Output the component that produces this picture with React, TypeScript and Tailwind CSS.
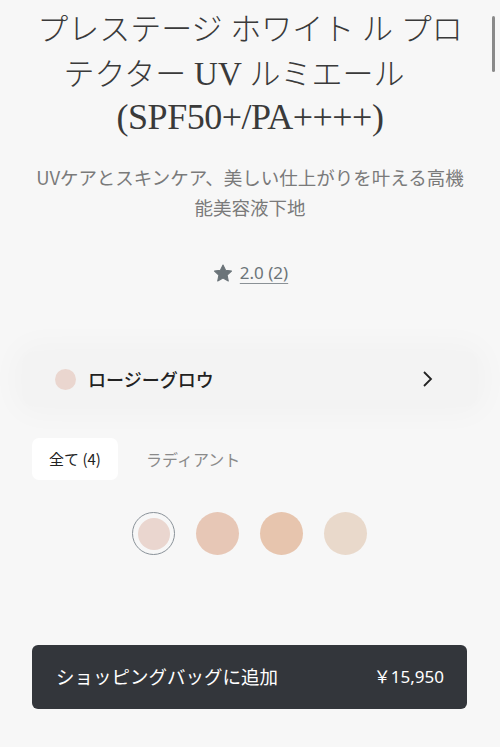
import React from 'react';

const swatches = [
  { id: 1, color: 'bg-[#ead6cf]', selected: true },
  { id: 2, color: 'bg-[#e7c7b6]', selected: false },
  { id: 3, color: 'bg-[#e7c5ae]', selected: false },
  { id: 4, color: 'bg-[#e9d9cb]', selected: false },
];

const StarIcon = () => (
  <svg width="22" height="21" viewBox="0 0 24 24" className="fill-[#6b7479]">
    <path d="M12 2.2l2.95 6.2 6.8.8-5.03 4.66 1.33 6.74L12 17.2l-6.05 3.4 1.33-6.74L2.25 9.2l6.8-.8z" strokeLinejoin="round" stroke="#6b7479" strokeWidth="1.2" />
  </svg>
);

const App: React.FC = () => {
  return (
    <div className="relative w-[500px] h-[747px] overflow-hidden bg-[#f7f7f7] font-['Noto_Sans_CJK_JP',sans-serif]">
      {/* scrollbar thumb */}
      <div className="absolute right-[5px] top-[16px] w-[3px] h-[56px] rounded-full bg-[#8a8a8a]" />

      {/* Title */}
      <h1 className="pt-[8px] px-[20px] text-center text-[31px] leading-[44px] font-light text-[#3a3a3a] font-['Liberation_Serif','Noto_Sans_CJK_JP',serif]">
        プレステージ ホワイト ル プロ<br />
        テクター <span className="text-[33px]">UV</span> ルミエール<span className="inline-block w-[32px]" /><br />
        <span className="text-[36px] tracking-[-0.5px] leading-[40px]">(SPF50+/PA++++)</span>
      </h1>

      {/* Description */}
      <p className="mt-[21px] px-[20px] text-center text-[18.5px] leading-[30px] text-[#7a7a7a]">
        UVケアとスキンケア、美しい仕上がりを叶える高機<br />
        能美容液下地
      </p>

      {/* Rating */}
      <div className="mt-[40px] flex items-center justify-center gap-[6px]">
        <StarIcon />
        <span className="text-[17px] leading-[22px] text-[#6b7479] underline underline-offset-[4px] decoration-[#8a9196] font-['Noto_Sans',sans-serif]">
          2.0 (2)
        </span>
      </div>

      {/* Variant selector */}
      <div className="mt-[67px] mx-[22px] h-[56px] rounded-[14px] bg-[#f3f3f3] shadow-[0_0_30px_8px_rgba(0,0,0,0.025)] flex items-center pl-[33px] pr-[43px]">
        <span className="w-[21px] h-[21px] rounded-full bg-[#ead6cf]" />
        <span className="ml-[12px] text-[18px] font-medium text-[#222]">ロージーグロウ</span>
        <svg className="ml-auto" width="14" height="18" viewBox="0 0 14 18" fill="none" stroke="#222" strokeWidth="1.8">
          <path d="M3 2l7 7-7 7" />
        </svg>
      </div>

      {/* Tabs */}
      <div className="mt-[31px] ml-[32px] flex items-center">
        <div className="w-[86px] h-[42px] rounded-[7px] bg-white flex items-center justify-center text-[15px] text-[#222]">
          全て (4)
        </div>
        <div className="ml-[28px] text-[16px] text-[#8a8a8a]">ラディアント</div>
      </div>

      {/* Swatches */}
      <div className="mt-[32px] flex justify-center gap-[21px] pr-[1px]">
        {swatches.map((s) =>
          s.selected ? (
            <div key={s.id} className="w-[43px] h-[43px] rounded-full border-[1.5px] border-[#8a9299] flex items-center justify-center">
              <div className={`w-[32px] h-[32px] rounded-full ${s.color}`} />
            </div>
          ) : (
            <div key={s.id} className={`w-[43px] h-[43px] rounded-full ${s.color}`} />
          )
        )}
      </div>

      {/* Add to bag */}
      <button className="absolute left-[32px] right-[33px] top-[645px] h-[64px] rounded-[6px] bg-[#33363b] flex items-center justify-between pl-[24px] pr-[23px] text-white">
        <span className="text-[18.5px]">ショッピングバッグに追加</span>
        <span className="text-[17px] font-['Noto_Sans','Noto_Sans_CJK_JP',sans-serif]">￥15,950</span>
      </button>
    </div>
  );
};

export default App;
